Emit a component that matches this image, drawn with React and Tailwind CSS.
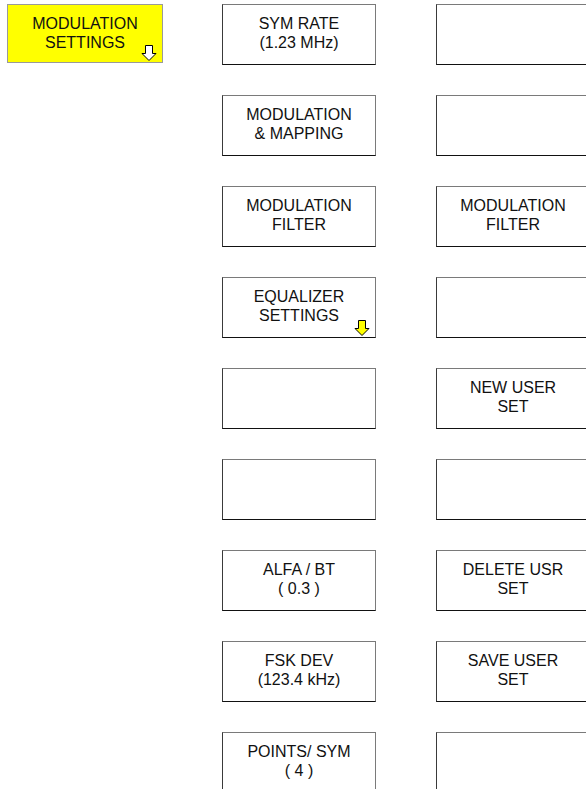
import React from 'react'

const middle = [
  ['SYM RATE', '(1.23 MHz)'],
  ['MODULATION', '& MAPPING'],
  ['MODULATION', 'FILTER'],
  ['EQUALIZER', 'SETTINGS', 'arrow'],
  [],
  [],
  ['ALFA / BT', '( 0.3 )'],
  ['FSK DEV', '(123.4 kHz)'],
  ['POINTS/ SYM', '( 4 )'],
]

const right = [
  [],
  [],
  ['MODULATION', 'FILTER'],
  [],
  ['NEW USER', 'SET'],
  [],
  ['DELETE USR', 'SET'],
  ['SAVE USER', 'SET'],
  [],
]

function DownArrow({ fill }) {
  return (
    <svg width="16" height="16" viewBox="0 0 16 16" className="absolute right-[5px] bottom-[1px]">
      <polygon points="4.5,0.5 11.5,0.5 11.5,8.5 15,8.5 8,15.5 1,8.5 4.5,8.5" fill={fill} stroke="#000" strokeWidth="1" />
    </svg>
  )
}

function SoftKey({ lines = [] }) {
  const hasArrow = lines[2] === 'arrow'
  return (
    <div className="relative w-[154px] h-[61px] shrink-0 bg-white border border-t-[#7a7a7a] border-l-[#3a3a3a] border-b-[#111] border-r-[#7a7a7a] pt-[9px] text-center text-[16px] leading-[19px] text-[#111]">
      <div>{lines[0]}</div>
      <div>{lines[1]}</div>
      {hasArrow && <DownArrow fill="#ffff00" />}
    </div>
  )
}

export default function App() {
  return (
    <div className="w-[586px] h-[789px] overflow-hidden bg-white flex items-start pt-[4px] pl-[7px]" style={{ fontFamily: '"Liberation Sans", Arial, sans-serif' }}>
      <div className="relative w-[156px] h-[59px] shrink-0 bg-[#ffff00] border border-[#9a9a9a] pt-[9px] text-center text-[16px] leading-[19px] text-[#111]">
        <div>MODULATION</div>
        <div>SETTINGS</div>
        <DownArrow fill="#ffffff" />
      </div>

      <div className="ml-[59px] flex flex-col gap-[30px] shrink-0">
        {middle.map((l, i) => <SoftKey key={i} lines={l} />)}
      </div>

      <div className="ml-[60px] flex flex-col gap-[30px] shrink-0">
        {right.map((l, i) => <SoftKey key={i} lines={l} />)}
      </div>
    </div>
  )
}
